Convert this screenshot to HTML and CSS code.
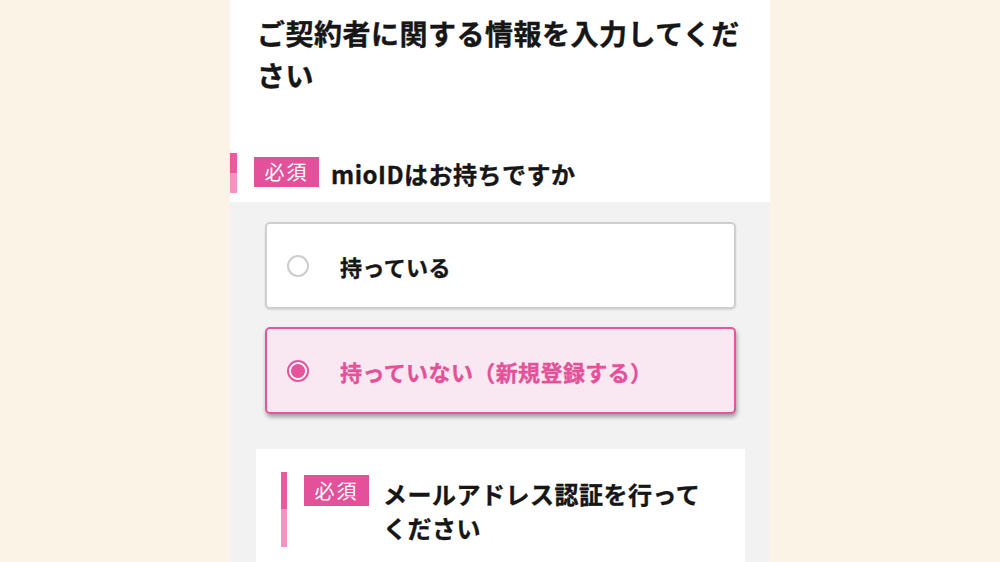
FILE: index.html
```html
<!DOCTYPE html>
<html lang="ja">
<head>
<meta charset="utf-8">
<link rel="stylesheet" href="styles.css">
</head>
<body>
<main class="page">
  <section class="head">
    <h1 class="title">ご契約者に関する情報を入力してください</h1>
    <div class="q q-top">
      <span class="bar"></span>
      <span class="badge">必須</span>
      <span class="q-text">mioIDはお持ちですか</span>
    </div>
  </section>
  <section class="body">
    <div class="options">
      <label class="opt">
        <span class="radio"></span>
        <span class="opt-text">持っている</span>
      </label>
      <label class="opt opt-on">
        <span class="radio radio-on"></span>
        <span class="opt-text">持っていない（新規登録する）</span>
      </label>
    </div>
    <div class="card">
      <div class="q q-card">
        <span class="bar"></span>
        <span class="badge">必須</span>
        <span class="q-text">メールアドレス認証を行って<br>ください</span>
      </div>
    </div>
  </section>
</main>
</body>
</html>
```

FILE: styles.css
```css
html, body {
  margin: 0;
  padding: 0;
  height: 100%;
  overflow: hidden;
}
body {
  background: #faf3e6;
  font-family: "Noto Sans CJK JP", "Noto Sans", sans-serif;
  color: #161616;
}
.page {
  width: 540px;
  margin: 0 auto;
  height: 562px;
  background: #f2f2f2;
}
.head {
  background: #fff;
  padding: 12px 0 9px 0;
}
.title {
  margin: 0;
  padding: 0 26px 0 27px;
  font-size: 28px;
  line-height: 42px;
  font-weight: 700;
  letter-spacing: 0.5px;
  -webkit-text-stroke: 0.4px currentColor;
}
.q {
  display: flex;
  align-items: flex-start;
  position: relative;
}
.q-top {
  margin-top: 57px;
  height: 40px;
  padding-left: 24px;
}
.bar {
  position: absolute;
  left: 0;
  top: 0;
  width: 7px;
  height: 100%;
  background: linear-gradient(#ea5aa0 0, #ea5aa0 50%, #f293c2 50%, #f293c2 100%);
}
.badge {
  flex: none;
  width: 65px;
  height: 30px;
  background: #e2519a;
  color: #fff;
  font-size: 20px;
  line-height: 30px;
  text-align: center;
  font-weight: 400;
  letter-spacing: 2px;
  margin-top: 4px;
}
.q-text {
  font-weight: 700;
  font-size: 24px;
  margin-left: 12px;
  letter-spacing: 0.5px;
  -webkit-text-stroke: 0.35px currentColor;
}
.q-top .q-text {
  line-height: 40px;
  margin-top: 1px;
}
.body {
  padding: 20px 34px 0 35px;
}
.options {
  display: flex;
  flex-direction: column;
  gap: 18px;
}
.opt {
  display: flex;
  align-items: center;
  height: 87px;
  box-sizing: border-box;
  background: #fff;
  border: 2px solid #cfcfcf;
  border-radius: 5px;
  box-shadow: 0 1px 2px rgba(0,0,0,0.12);
  padding-left: 20px;
}
.opt-on {
  background: #f9e8f1;
  border-color: #e5559d;
  box-shadow: 1px 3px 4px rgba(0,0,0,0.35);
}
.radio {
  flex: none;
  width: 22px;
  height: 22px;
  box-sizing: border-box;
  border: 2px solid #cdcdcd;
  border-radius: 50%;
  background: #fff;
}
.radio-on {
  border-color: #e5559d;
  background: radial-gradient(circle, #e5559d 0, #e5559d 6.5px, #fff 7.5px);
}
.opt-text {
  font-size: 22px;
  font-weight: 700;
  margin-left: 31px;
  letter-spacing: 0.4px;
  -webkit-text-stroke: 0.35px currentColor;
}
.opt-on .opt-text {
  color: #e2519a;
}
.card {
  margin: 35px -9px 0 -9px;
  background: #fff;
  padding: 23px 0 40px 25px;
}
.q-card {
  padding-left: 23px;
  padding-top: 0;
}
.q-card .bar {
  height: 75px;
  width: 6px;
}
.q-card .badge {
  margin-top: 3px;
  height: 31px;
  line-height: 31px;
}
.q-card .q-text {
  line-height: 34px;
  margin-top: 5px;
  margin-left: 14px;
}
```
